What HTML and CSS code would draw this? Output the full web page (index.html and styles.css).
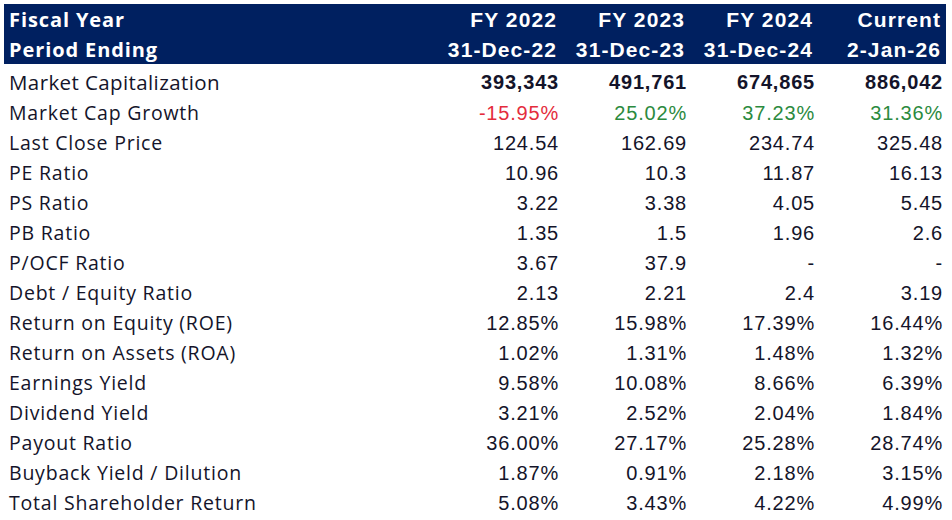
FILE: index.html
```html
<!DOCTYPE html>
<html>
<head>
<meta charset="utf-8">
<link rel="stylesheet" href="styles.css">
</head>
<body>
<div class="wrap">
<table class="ratios">
  <colgroup>
    <col class="c-label"><col class="c-num"><col class="c-num"><col class="c-num"><col class="c-num">
  </colgroup>
  <thead>
    <tr><th class="lbl">Fiscal Year</th><th>FY 2022</th><th>FY 2023</th><th>FY 2024</th><th>Current</th></tr>
    <tr><th class="lbl">Period Ending</th><th>31-Dec-22</th><th>31-Dec-23</th><th>31-Dec-24</th><th>2-Jan-26</th></tr>
  </thead>
  <tbody>
    <tr class="first"><td class="lbl">Market Capitalization</td><td>393,343</td><td>491,761</td><td>674,865</td><td>886,042</td></tr>
    <tr><td class="lbl">Market Cap Growth</td><td class="neg">-15.95%</td><td class="pos">25.02%</td><td class="pos">37.23%</td><td class="pos">31.36%</td></tr>
    <tr><td class="lbl">Last Close Price</td><td>124.54</td><td>162.69</td><td>234.74</td><td>325.48</td></tr>
    <tr><td class="lbl">PE Ratio</td><td>10.96</td><td>10.3</td><td>11.87</td><td>16.13</td></tr>
    <tr><td class="lbl">PS Ratio</td><td>3.22</td><td>3.38</td><td>4.05</td><td>5.45</td></tr>
    <tr><td class="lbl">PB Ratio</td><td>1.35</td><td>1.5</td><td>1.96</td><td>2.6</td></tr>
    <tr><td class="lbl">P/OCF Ratio</td><td>3.67</td><td>37.9</td><td>-</td><td>-</td></tr>
    <tr><td class="lbl">Debt / Equity Ratio</td><td>2.13</td><td>2.21</td><td>2.4</td><td>3.19</td></tr>
    <tr><td class="lbl">Return on Equity (ROE)</td><td>12.85%</td><td>15.98%</td><td>17.39%</td><td>16.44%</td></tr>
    <tr><td class="lbl">Return on Assets (ROA)</td><td>1.02%</td><td>1.31%</td><td>1.48%</td><td>1.32%</td></tr>
    <tr><td class="lbl">Earnings Yield</td><td>9.58%</td><td>10.08%</td><td>8.66%</td><td>6.39%</td></tr>
    <tr><td class="lbl">Dividend Yield</td><td>3.21%</td><td>2.52%</td><td>2.04%</td><td>1.84%</td></tr>
    <tr><td class="lbl">Payout Ratio</td><td>36.00%</td><td>27.17%</td><td>25.28%</td><td>28.74%</td></tr>
    <tr><td class="lbl">Buyback Yield / Dilution</td><td>1.87%</td><td>0.91%</td><td>2.18%</td><td>3.15%</td></tr>
    <tr><td class="lbl">Total Shareholder Return</td><td>5.08%</td><td>3.43%</td><td>4.22%</td><td>4.99%</td></tr>
  </tbody>
</table>
</div>
</body>
</html>
```
FILE: styles.css
```css
html, body {
  margin: 0;
  padding: 0;
  background: #ffffff;
}
.wrap {
  padding: 4px 0 0 4px;
}
.ratios {
  border-collapse: collapse;
  border-spacing: 0;
  table-layout: fixed;
  width: 942px;
  font-family: "Liberation Sans", Arial, sans-serif;
  font-size: 20px;
  color: #14142a;
}
.c-label { width: 430px; }
.c-num { width: 128px; }
.ratios th,
.ratios td {
  padding: 4px 3px 0 5px;
  line-height: 26px;
  height: 26px;
  text-align: right;
  white-space: nowrap;
  letter-spacing: 0.8px;
}
.ratios thead th {
  background: #002060;
  color: #ffffff;
  font-weight: bold;
  font-size: 21px;
  letter-spacing: 1.1px;
  padding-top: 2px;
  padding-right: 5px;
  line-height: 28px;
  height: 28px;
}
.ratios thead th.lbl {
  font-size: 20px;
  letter-spacing: 0.9px;
}
.ratios .lbl {
  text-align: left;
  font-family: "Open Sans", "Noto Sans", sans-serif;
  padding-left: 5px;
}
.ratios td.lbl {
  font-size: 19.5px;
  letter-spacing: 0.78px;
}
.ratios tr.first td {
  font-weight: bold;
  line-height: 28px;
  height: 28px;
}
.ratios tr.first td.lbl {
  font-weight: normal;
  font-size: 20.5px;
  letter-spacing: 0.4px;
}
.neg { color: #e42c3c; }
.pos { color: #2b8a3e; }
```
